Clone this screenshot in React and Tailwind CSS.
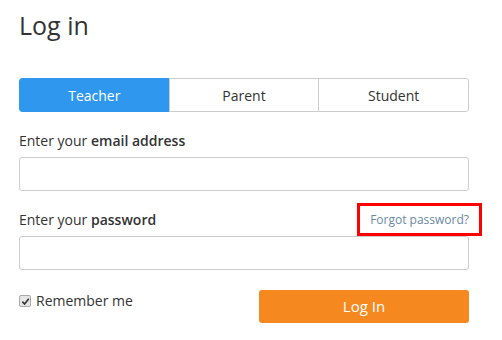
import { useState } from "react";

const tabs = ["Teacher", "Parent", "Student"];

export default function App() {
  const [active, setActive] = useState("Teacher");
  const [remember, setRemember] = useState(true);

  return (
    <div
      className="w-[502px] h-[340px] bg-white text-[#333] overflow-hidden"
      style={{ fontFamily: '"Open Sans", "Liberation Sans", sans-serif' }}
    >
      <div className="w-[450px] ml-[19px] pt-[10px]">
        <h1 className="text-[25px] leading-[30px] font-normal">Log in</h1>

        {/* role tabs */}
        <div className="mt-[38px] flex h-[34px] rounded-[3px] overflow-hidden">
          {tabs.map((t, i) => (
            <button
              key={t}
              onClick={() => setActive(t)}
              className={
                "flex-1 text-[14px] border " +
                (active === t
                  ? "bg-[#2f98ee] border-[#2f98ee] text-white"
                  : "bg-white border-[#cccccc] text-[#333]") +
                (i > 0 ? " -ml-px" : "") +
                (i === 0 ? " rounded-l-[3px]" : "") +
                (i === tabs.length - 1 ? " rounded-r-[3px]" : "")
              }
            >
              {t}
            </button>
          ))}
        </div>

        {/* email */}
        <label className="block mt-[19px] text-[14px] leading-[20px]">
          Enter your <span className="font-semibold">email address</span>
        </label>
        <input
          type="email"
          className="mt-[6px] block w-full h-[34px] border border-[#cccccc] rounded-[3px] px-2 text-[14px] outline-none"
        />

        {/* password */}
        <div className="mt-[19px] flex items-center justify-between h-[20px]">
          <label className="text-[14px] leading-[20px]">
            Enter your <span className="font-semibold">password</span>
          </label>
          <div className="relative">
            <a href="#" className="block text-[12px] text-[#6a88a3] leading-[16px]">
              Forgot password?
            </a>
            {/* highlight box drawn over the link */}
            <div className="absolute left-[-13px] right-[-13px] top-[-9px] bottom-[-8px] border-[3px] border-[#ff0000]" />
          </div>
        </div>
        <input
          type="password"
          className="mt-[6px] block w-full h-[34px] border border-[#cccccc] rounded-[3px] px-2 text-[14px] outline-none"
        />

        {/* remember + submit */}
        <div className="mt-[20px] flex items-start justify-between">
          <label
            className="flex items-center gap-[5px] text-[14px] leading-[20px] mt-[1px] cursor-pointer"
            onClick={() => setRemember(!remember)}
          >
            <span className="w-[12px] h-[12px] border border-[#a9a9a9] rounded-[2px] bg-[#e6e6e6] flex items-center justify-center">
              {remember && (
                <svg viewBox="0 0 10 10" className="w-[9px] h-[9px]">
                  <path d="M1.5 5.2 L4 7.8 L8.6 2" fill="none" stroke="#333" strokeWidth="1.8" />
                </svg>
              )}
            </span>
            Remember me
          </label>
          <button className="w-[210px] h-[33px] bg-[#f5891f] text-white text-[15px] rounded-[3px]">
            Log In
          </button>
        </div>
      </div>
    </div>
  );
}
